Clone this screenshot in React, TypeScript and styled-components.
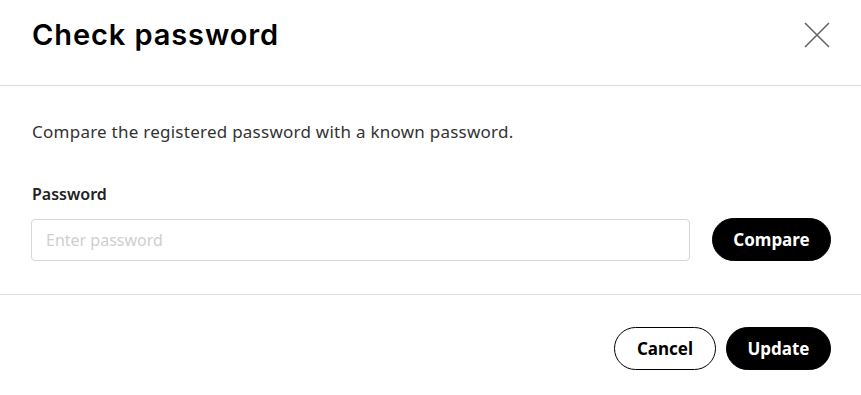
import React from "react";
import styled, { createGlobalStyle } from "styled-components";

const GlobalStyle = createGlobalStyle`
    html, body {
        margin: 0;
        padding: 0;
        background: #ffffff;
    }
    body {
        font-family: "Noto Sans", "Open Sans", Arial, sans-serif;
        color: #222;
    }
`;

const Dialog = styled.div`
    width: 861px;
    height: 395px;
    background: #fff;
    display: flex;
    flex-direction: column;
`;

const Header = styled.div`
    height: 86px;
    box-sizing: border-box;
    display: flex;
    align-items: flex-start;
    justify-content: space-between;
    padding: 14px 30px 0 32px;
    border-bottom: 1px solid #dcdcdc;
`;

const Title = styled.h2`
    margin: 0;
    font-family: "Inter", "Lato", sans-serif;
    font-weight: 600;
    font-size: 29px;
    line-height: 42px;
    letter-spacing: 0.9px;
    color: #000;
`;

const CloseButton = styled.button`
    width: 28px;
    height: 28px;
    margin-top: 7px;
    padding: 0;
    border: none;
    background: none;
    display: flex;
    align-items: center;
    justify-content: center;
    cursor: pointer;
`;

const Body = styled.div`
    padding: 34px 30px 33px 31px;
    border-bottom: 1px solid #dcdcdc;
    display: flex;
    flex-direction: column;
`;

const Description = styled.p`
    margin: 0 0 0 1px;
    font-size: 17px;
    letter-spacing: 0.25px;
    line-height: 24px;
    color: #333;
`;

const Label = styled.label`
    margin: 38px 0 0 1px;
    font-size: 16px;
    line-height: 24px;
    font-weight: 600;
    color: #222;
`;

const FieldRow = styled.div`
    margin-top: 12px;
    display: flex;
    align-items: center;
    gap: 22px;
`;

const Input = styled.input`
    flex: 1;
    height: 42px;
    box-sizing: border-box;
    border: 1px solid #d6d6d6;
    border-radius: 4px;
    padding: 0 14px;
    font-family: "Noto Sans", "Open Sans", sans-serif;
    font-size: 16px;
    color: #222;
    outline: none;
    &::placeholder {
        color: #cfcfcf;
    }
`;

const PillButton = styled.button<{ $variant: "solid" | "outline"; $width: number }>`
    width: ${({ $width }) => $width}px;
    height: 43px;
    box-sizing: border-box;
    border-radius: 22px;
    font-family: "Noto Sans", "Open Sans", sans-serif;
    font-weight: 700;
    font-size: 17px;
    cursor: pointer;
    background: ${({ $variant }) => ($variant === "solid" ? "#000" : "#fff")};
    color: ${({ $variant }) => ($variant === "solid" ? "#fff" : "#000")};
    border: 1px solid #000;
    padding: 0;
`;

const Footer = styled.div`
    display: flex;
    justify-content: flex-end;
    gap: 10px;
    padding: 32px 30px 0 0;
`;

export default function App() {
    return (
        <>
            <GlobalStyle />
            <Dialog>
                <Header>
                    <Title>Check password</Title>
                    <CloseButton aria-label="Close">
                        <svg width="26" height="26" viewBox="0 0 26 26">
                            <path d="M1 1 L25 25 M25 1 L1 25" stroke="#666" strokeWidth="1.6" fill="none" />
                        </svg>
                    </CloseButton>
                </Header>
                <Body>
                    <Description>Compare the registered password with a known password.</Description>
                    <Label>Password</Label>
                    <FieldRow>
                        <Input type="password" placeholder="Enter password" />
                        <PillButton $variant="solid" $width={119}>
                            Compare
                        </PillButton>
                    </FieldRow>
                </Body>
                <Footer>
                    <PillButton $variant="outline" $width={102}>
                        Cancel
                    </PillButton>
                    <PillButton $variant="solid" $width={105}>
                        Update
                    </PillButton>
                </Footer>
            </Dialog>
        </>
    );
}
